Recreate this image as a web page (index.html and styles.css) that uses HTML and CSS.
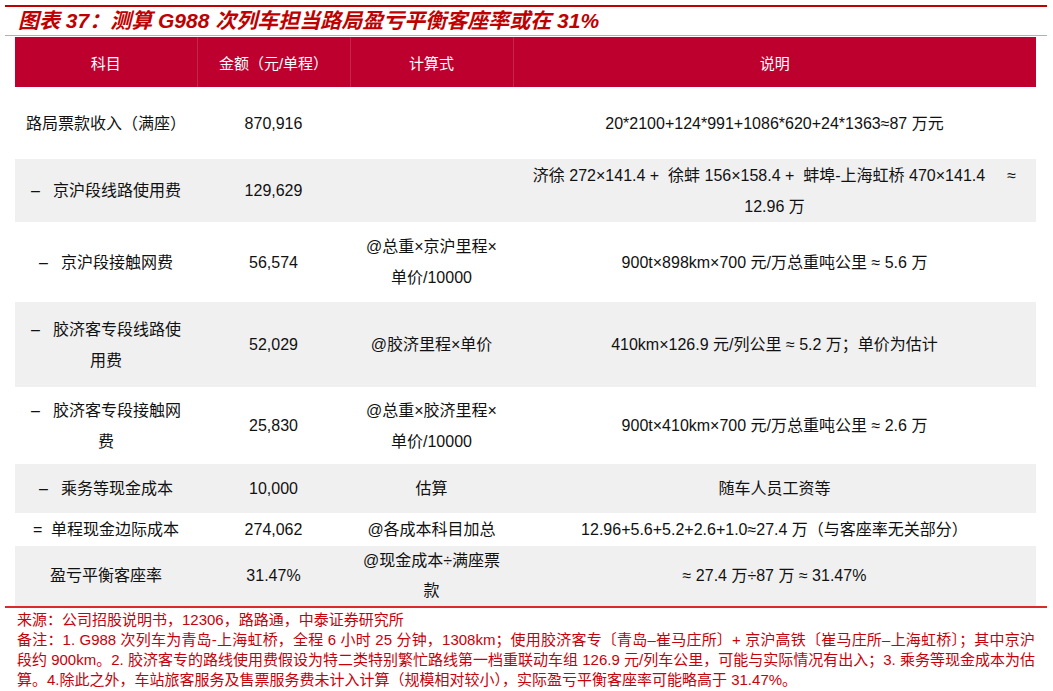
FILE: index.html
```html
<!DOCTYPE html>
<html lang="zh-CN">
<head>
<meta charset="utf-8">
<title>图表 37</title>
<link rel="stylesheet" href="styles.css">
</head>
<body>
<div class="page">
  <h1 class="title">图表 37：测算 G988 次列车担当路局盈亏平衡客座率或在 31%</h1>
  <table class="tbl">
    <colgroup>
      <col class="c1"><col class="c2"><col class="c3"><col class="c4">
    </colgroup>
    <thead>
      <tr><th>科目</th><th>金额（元/单程）</th><th>计算式</th><th>说明</th></tr>
    </thead>
    <tbody>
      <tr class="h72">
        <td>路局票款收入（满座）</td><td>870,916</td><td></td>
        <td>20*2100+124*991+1086*620+24*1363≈87 万元</td>
      </tr>
      <tr class="h63 alt">
        <td>–&nbsp;&nbsp; 京沪段线路使用费</td><td>129,629</td><td></td>
        <td>济徐 272×141.4 + &nbsp;徐蚌 156×158.4 + &nbsp;蚌埠-上海虹桥 470×141.4 &nbsp;&nbsp;&nbsp;&nbsp;≈<br>12.96 万</td>
      </tr>
      <tr class="h80">
        <td>–&nbsp;&nbsp; 京沪段接触网费</td><td>56,574</td>
        <td>@总重×京沪里程×<br>单价/10000</td>
        <td>900t×898km×700 元/万总重吨公里 ≈ 5.6 万</td>
      </tr>
      <tr class="h85 alt">
        <td>–&nbsp;&nbsp; 胶济客专段线路使<br>用费</td><td>52,029</td>
        <td>@胶济里程×单价</td>
        <td>410km×126.9 元/列公里 ≈ 5.2 万；单价为估计</td>
      </tr>
      <tr class="h77">
        <td>–&nbsp;&nbsp; 胶济客专段接触网<br>费</td><td>25,830</td>
        <td>@总重×胶济里程×<br>单价/10000</td>
        <td>900t×410km×700 元/万总重吨公里 ≈ 2.6 万</td>
      </tr>
      <tr class="h49 alt">
        <td>–&nbsp;&nbsp; 乘务等现金成本</td><td>10,000</td>
        <td>估算</td>
        <td>随车人员工资等</td>
      </tr>
      <tr class="h33">
        <td>=&nbsp; 单程现金边际成本</td><td>274,062</td>
        <td>@各成本科目加总</td>
        <td>12.96+5.6+5.2+2.6+1.0≈27.4 万（与客座率无关部分）</td>
      </tr>
      <tr class="h60 alt">
        <td>盈亏平衡客座率</td><td>31.47%</td>
        <td>@现金成本÷满座票<br>款</td>
        <td>≈ 27.4 万÷87 万 ≈ 31.47%</td>
      </tr>
    </tbody>
  </table>
  <div class="notes">
    <p class="note">来源：公司招股说明书，12306，路路通，中泰证券研究所</p>
    <p class="note full">备注：1. G988 次列车为青岛-上海虹桥，全程 6 小时 25 分钟，1308km；使用胶济客专〔青岛–崔马庄所〕+ 京沪高铁〔崔马庄所–上海虹桥〕；其中京沪</p>
    <p class="note full">段约 900km。2. 胶济客专的路线使用费假设为特二类特别繁忙路线第一档重联动车组 126.9 元/列车公里，可能与实际情况有出入；3. 乘务等现金成本为估</p>
    <p class="note">算。4.除此之外，车站旅客服务及售票服务费未计入计算（规模相对较小），实际盈亏平衡客座率可能略高于 31.47%。</p>
  </div>
</div>
</body>
</html>
```

FILE: styles.css
```css
html, body {
  margin: 0;
  padding: 0;
  background: #ffffff;
}

body {
  font-family: "Liberation Sans", "Noto Sans CJK SC", sans-serif;
  color: #111111;
}

.page {
  width: 1042px;
  padding: 5px 0 0 5px;
}

.title {
  margin: 0;
  height: 28px;
  line-height: 28px;
  padding-left: 13px;
  border-top: 2px solid #c00000;
  border-bottom: 1px solid #e39c9c;
  font-size: 21px;
  font-weight: bold;
  font-style: italic;
  color: #c00000;
  white-space: nowrap;
}

.tbl {
  margin: 1px 0 0 10px;
  width: 1021px;
  border-collapse: collapse;
  border-spacing: 0;
  table-layout: fixed;
  font-size: 16px;
}

.c1 { width: 182px; }
.c2 { width: 153px; }
.c3 { width: 163px; }
.c4 { width: 523px; }

.tbl th {
  height: 50px;
  padding: 0;
  background: #be002f;
  color: #ffffff;
  font-size: 15px;
  font-weight: normal;
  text-align: center;
  vertical-align: middle;
  border-left: 1px solid #c6264b;
}

.tbl th:first-child {
  border-left: none;
}

.tbl td {
  padding: 0 4px;
  line-height: 31px;
  text-align: center;
  vertical-align: middle;
  white-space: nowrap;
}

.tbl tr.alt td {
  background: #f0f0f0;
}

.h72 td { height: 72px; }
.h63 td { height: 63px; }
.h80 td { height: 80px; }
.h85 td { height: 85px; }
.h77 td { height: 77px; }
.h49 td { height: 49px; }
.h33 td { height: 33px; }
.h60 td { height: 60px; line-height: 30px; }

.notes {
  border-top: 2px solid #d92b2b;
  padding: 2px 12px 0 12px;
  color: #c8000a;
  font-size: 15px;
}

.note {
  margin: 0;
  line-height: 20px;
  white-space: nowrap;
}

.note.full {
  text-align: justify;
  text-align-last: justify;
  white-space: normal;
}
```
